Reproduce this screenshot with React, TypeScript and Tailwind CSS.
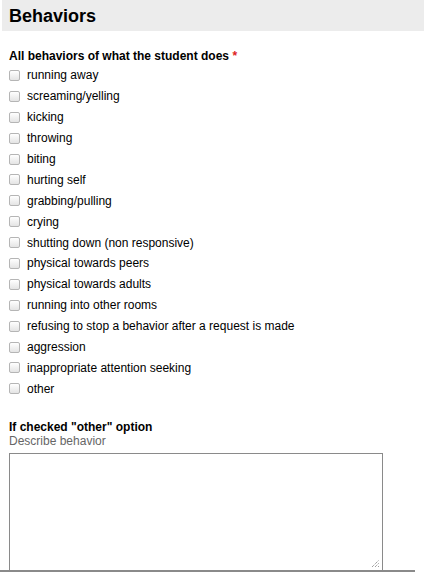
const behaviors = [
  "running away",
  "screaming/yelling",
  "kicking",
  "throwing",
  "biting",
  "hurting self",
  "grabbing/pulling",
  "crying",
  "shutting down (non responsive)",
  "physical towards peers",
  "physical towards adults",
  "running into other rooms",
  "refusing to stop a behavior after a request is made",
  "aggression",
  "inappropriate attention seeking",
  "other",
];

export default function App() {
  return (
    <div
      className="h-[572px] w-[424px] overflow-hidden bg-white text-[12px] text-black"
      style={{ fontFamily: '"Liberation Sans", Arial, sans-serif' }}
    >
      <div className="ml-[2px] flex h-[31px] items-center bg-[#ececec] pl-[7px]">
        <h1 className="text-[18px] font-bold leading-none">Behaviors</h1>
      </div>

      <div className="px-[9px]">
        <div className="mt-[18px] font-bold leading-[14px]">
          All behaviors of what the student does{" "}
          <span className="text-[#d22]">*</span>
        </div>

        <div className="mt-[2px] flex flex-col">
          {behaviors.map((b) => (
            <label key={b} className="flex h-[20.9px] items-center gap-[7px]">
              <span className="h-[11px] w-[11px] rounded-[2px] border border-[#b5b5b5] bg-gradient-to-b from-white to-[#e4e4e4]" />
              <span className="leading-none">{b}</span>
            </label>
          ))}
        </div>

        <div className="mt-[21px] font-bold leading-[14px]">If checked "other" option</div>
        <div className="leading-[14px] text-[#666]">Describe behavior</div>

        <div className="relative mt-[5px] h-[117px] w-[374px] border border-b-0 border-[#8a8a8a] bg-white">
          <svg className="absolute bottom-[2px] right-[2px]" width="9" height="9" viewBox="0 0 9 9">
            <path d="M1 8 L8 1 M4 8 L8 4 M7 8 L8 7" stroke="#777" strokeWidth="1" strokeDasharray="1 1" />
          </svg>
        </div>
      </div>
      <div className="h-[2px] w-[415px] bg-[#8a8a8a]" />
    </div>
  );
}
